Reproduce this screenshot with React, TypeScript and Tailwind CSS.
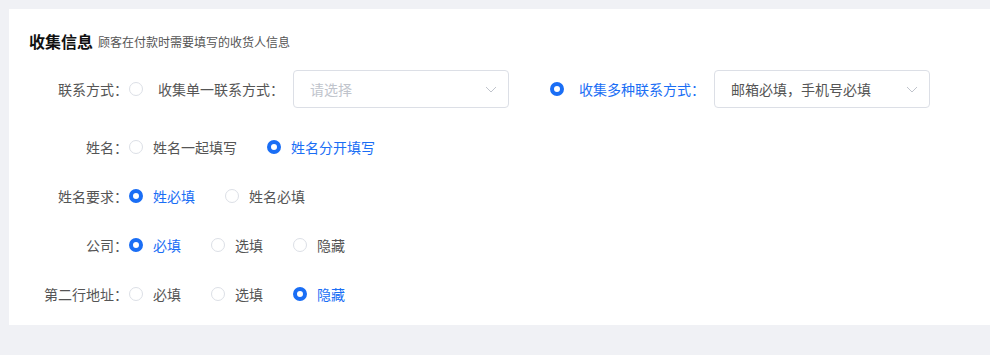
import React from 'react';

const font = { fontFamily: '"Noto Sans CJK SC", "Noto Sans", sans-serif' };

const Radio: React.FC<{ checked?: boolean }> = ({ checked }) => (
    <span
        className={`inline-block w-[14px] h-[14px] rounded-full shrink-0 ${checked ? 'border-[4px] border-[#1a6ef5] bg-white' : 'border border-[#dcdfe6] bg-white'}`}
    />
);

const Option: React.FC<{ label: string; checked?: boolean }> = ({ label, checked }) => (
    <label className="flex items-center mr-[30px] cursor-pointer">
        <Radio checked={checked} />
        <span className={`ml-[10px] text-[14px] leading-[20px] ${checked ? 'text-[#1a6ef5]' : 'text-[#555]'}`}>{label}</span>
    </label>
);

const Chevron = () => (
    <svg width="12" height="7" viewBox="0 0 12 7" fill="none" className="shrink-0">
        <path d="M1 1l5 5 5-5" stroke="#c0c4cc" strokeWidth="1" />
    </svg>
);

const Select: React.FC<{ value?: string; placeholder?: string }> = ({ value, placeholder }) => (
    <div className="w-[216px] h-[38px] border border-[#dcdfe6] rounded-[4px] flex items-center justify-between pl-[16px] pr-[11px] bg-white">
        <span className={`text-[14px] leading-[20px] ${value ? 'text-[#555]' : 'text-[#c0c4cc]'}`}>{value || placeholder}</span>
        <Chevron />
    </div>
);

const Row: React.FC<{ label: string; tall?: boolean; children: React.ReactNode }> = ({ label, tall, children }) => (
    <div className={`flex items-center ${tall ? 'h-[38px]' : 'h-[20px]'}`}>
        <div className="w-[99px] text-right text-[14px] text-[#555] leading-[20px] whitespace-nowrap">{label}</div>
        <div className="flex items-center ml-[1px]">{children}</div>
    </div>
);

export default function App() {
    return (
        <div style={font} className="w-[990px] h-[355px] bg-[#f0f1f5] overflow-hidden pt-[9px] pl-[9px]">
            <div className="w-[990px] h-[316px] bg-white pt-[22px] pl-[20px]">
                <div className="flex items-end h-[20px] leading-[20px]">
                    <span className="text-[16px] font-bold text-[#111]">收集信息</span>
                    <span className="ml-[5px] text-[12px] text-[#555] leading-[18px]">顾客在付款时需要填写的收货人信息</span>
                </div>

                <div className="mt-[19px] flex flex-col gap-[29px]">
                    <Row label="联系方式：" tall>
                        <Radio />
                        <span className="ml-[15px] text-[14px] leading-[20px] text-[#555] mr-[9px]">收集单一联系方式：</span>
                        <Select placeholder="请选择" />
                        <span className="ml-[41px] flex"><Radio checked /></span>
                        <span className="ml-[15px] text-[14px] leading-[20px] text-[#1a6ef5] mr-[9px]">收集多种联系方式：</span>
                        <Select value="邮箱必填，手机号必填" />
                    </Row>
                    <Row label="姓名：">
                        <Option label="姓名一起填写" />
                        <Option label="姓名分开填写" checked />
                    </Row>
                    <Row label="姓名要求：">
                        <Option label="姓必填" checked />
                        <Option label="姓名必填" />
                    </Row>
                    <Row label="公司：">
                        <Option label="必填" checked />
                        <Option label="选填" />
                        <Option label="隐藏" />
                    </Row>
                    <Row label="第二行地址：">
                        <Option label="必填" />
                        <Option label="选填" />
                        <Option label="隐藏" checked />
                    </Row>
                </div>
            </div>
        </div>
    );
}
